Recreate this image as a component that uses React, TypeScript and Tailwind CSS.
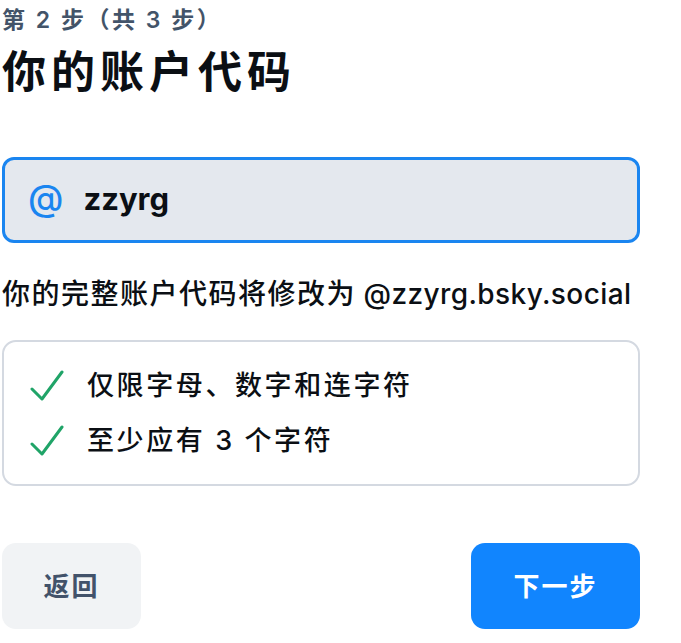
function CheckMark() {
  return (
    <svg width="36" height="32" viewBox="0 0 36 32" fill="none" className="shrink-0">
      <path
        d="M2 19 L12 29 L32 2"
        stroke="#20a468"
        strokeWidth="3"
        strokeLinecap="round"
        strokeLinejoin="round"
      />
    </svg>
  );
}

export default function App() {
  return (
    <div
      className="w-[681px] h-[643px] bg-white overflow-hidden pl-[2px] pr-[41px]"
      style={{ fontFamily: '"Inter", "Noto Sans CJK SC", sans-serif' }}
    >
      {/* Header */}
      <p className="pt-[7px] text-[23px] leading-[26px] font-semibold text-[#435469] tracking-[2.5px]">
        第 2 步（共 3 步）
      </p>
      <h1 className="mt-[13px] text-[44px] leading-[52px] font-bold text-[#0b0f14] tracking-[5px]">
        你的账户代码
      </h1>

      {/* Handle input */}
      <div className="mt-[59px] h-[86px] flex items-center gap-[20px] px-[23px] rounded-[12px] border-[3px] border-[#1a85f0] bg-[#e4e8ee]">
        <span className="text-[36px] leading-none font-medium text-[#1a85f0] -mt-[4px]">@</span>
        <span className="text-[31px] font-bold text-[#0b0f14] -mt-[2px]">zzyrg</span>
      </div>

      <p className="mt-[34px] text-[28px] leading-[34px] font-medium text-[#0b0f14]">
        <span className="tracking-[1.5px]">你的完整账户代码将修改为</span>{" "}
        <span className="tracking-[0.4px]">@zzyrg.bsky.social</span>
      </p>

      {/* Rules */}
      <div className="mt-[29px] h-[146px] rounded-[14px] border-2 border-[#d4d9e1] pl-[26px] pr-[24px] flex flex-col justify-center gap-[21px]">
        <div className="flex items-center gap-[21px]">
          <CheckMark />
          <span className="text-[27px] leading-[34px] font-medium text-[#0b0f14] tracking-[2.6px]">
            仅限字母、数字和连字符
          </span>
        </div>
        <div className="flex items-center gap-[21px]">
          <CheckMark />
          <span className="text-[27px] leading-[34px] font-medium text-[#0b0f14] tracking-[2.6px]">
            至少应有 3 个字符
          </span>
        </div>
      </div>

      {/* Actions */}
      <div className="mt-[57px] flex justify-between">
        <button className="w-[139px] h-[86px] rounded-[14px] bg-[#f1f3f5] text-[26px] font-bold text-[#42526a] tracking-[2px]">
          返回
        </button>
        <button className="w-[169px] h-[86px] rounded-[14px] bg-[#1185fe] text-[26px] font-bold text-white tracking-[2px]">
          下一步
        </button>
      </div>
    </div>
  );
}
